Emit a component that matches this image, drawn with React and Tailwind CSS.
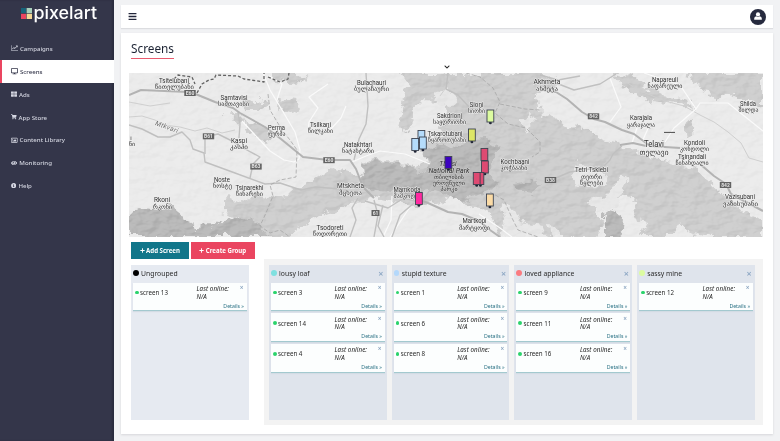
import React from "react";
import {
  FaDesktop, FaThLarge, FaShoppingCart, FaRegImage, FaEye,
  FaInfoCircle, FaBars, FaPlus, FaChevronDown,
} from "react-icons/fa";

function LineChartIcon({ className }) {
  return (
    <svg viewBox="0 0 14 12" className={className} fill="none" stroke="currentColor">
      <path d="M0.6 0.5V11.2H14" strokeWidth="1.2" />
      <path d="M2.6 8.4L5.6 5L7.8 7L12 2.4" strokeWidth="1.9" />
      <path d="M9.4 1.2H13.2V5Z" fill="currentColor" stroke="none" />
    </svg>
  );
}

const NAV = [
  { label: "Campaigns", icon: LineChartIcon, size: "h-[6px] w-[7px]" },
  { label: "Screens", icon: FaDesktop, active: true, size: "h-[6.5px] w-[7px]" },
  { label: "Ads", icon: FaThLarge, size: "size-[6px]" },
  { label: "App Store", icon: FaShoppingCart, size: "size-[5.6px]" },
  { label: "Content Library", icon: FaRegImage, size: "h-[6.5px] w-[6.6px]" },
  { label: "Monitoring", icon: FaEye, size: "h-[6px] w-[6.3px]" },
  { label: "Help", icon: FaInfoCircle, size: "size-[5.4px]" },
];

const GROUPS = [
  { name: "lousy loaf", color: "#7fe0e0", screens: ["screen 3", "screen 14", "screen 4"] },
  { name: "stupid texture", color: "#b4d8fb", screens: ["screen 1", "screen 6", "screen 8"] },
  { name: "loved appliance", color: "#fb7b80", screens: ["screen 9", "screen 11", "screen 16"] },
  { name: "sassy mine", color: "#dcfba0", screens: ["screen 12"] },
];

/* [text, centre x, baseline y, width] */
const PLACES = [
  ["Tsitelubani", 174, 83, 30], ["წითელუბანი", 174.5, 89, 39],
  ["Samtavisi", 234, 100, 27], ["სამთავისი", 233.5, 106, 31],
  ["Perma", 276.5, 130, 17], ["ფერმა", 276.5, 136, 18],
  ["Kaspi", 239, 143, 16], ["კასპი", 239, 149, 18],
  ["Tsilkani", 320.5, 127, 21], ["წილკანი", 320.5, 133, 25],
  ["Noste", 222, 182, 16], ["ნოსტე", 222.5, 188, 19],
  ["Tsinarekhi", 249.5, 190, 28], ["წინარეხი", 249.5, 196, 27],
  ["Rkoni", 162, 202, 16], ["რკონი", 162.5, 209, 19],
  ["Tsodoreti", 330, 230, 27], ["წოდორეთი", 330, 236, 34],
  ["Bulachauri", 371.5, 85, 29], ["ბულაჩაური", 371.5, 91, 35],
  ["Natakhtari", 358, 147, 28], ["ნატახტარი", 358, 153, 32],
  ["Mtskheta", 350.5, 188, 27], ["მცხეთა", 350.5, 195, 23],
  ["Mamkoda", 407, 192, 27], ["მამკოდა", 406, 198, 25],
  ["Sakdrioni", 449.5, 117.5, 25], ["საყდრიონი", 449.5, 124, 33],
  ["Sioni", 476.5, 107, 14], ["სიონი", 476.5, 113, 17],
  ["Tskarotubani", 445, 135.5, 35], ["წყაროთუბანი", 447, 142, 38],
  ["Kochbaani", 515, 163.5, 29], ["კოჭბაანი", 514, 170, 27],
  ["Martkopi", 474.5, 223, 24], ["მარტყოფი", 474.5, 230, 31],
  ["Akhmeta", 547, 84, 27], ["ახმეტა", 547, 91, 22],
  ["Napareuli", 665, 81.5, 26], ["ნაფარეული", 665, 88, 35],
  ["Shilda", 748, 105.5, 16], ["შილდა", 748.5, 111.5, 20],
  ["Karajala", 641, 120, 22], ["ყარაჯალა", 641, 126.5, 28],
  ["Kondoli", 694.5, 145, 21], ["კონდოლი", 694.5, 151, 29],
  ["Tsinandali", 692, 159, 28], ["წინანდალი", 692, 165, 33],
  ["Tetri Tsklebi", 591.5, 172, 33], ["თეთრი", 591.5, 178.5, 21], ["წყლები", 591.5, 185, 23],
  ["Vazisubani", 740, 199, 30], ["ვაზისუბანი", 740.5, 205.5, 35],
];

const SHIELDS = [
  ["E60", 190, 93], ["E60", 329, 160.2], ["B61", 208.5, 136.3], ["B63", 256, 166.6],
  ["61", 375.5, 213], ["842", 593.5, 116.3], ["842", 725.5, 185], ["B38", 550.5, 180],
];

const PINS = [
  [487, 110, "#dcfba0"], [468.5, 129, "#dde666"], [418, 130.5, "#b5dcfb"],
  [411.8, 138.5, "#b5dcfb"], [419.5, 137, "#b5dcfb"], [445, 156.5, "#3d03c0"],
  [481, 148.5, "#de4a72"], [481.5, 161, "#de4a72"], [477, 172.5, "#de4a72"],
  [473.3, 172.5, "#de4a72"], [415.5, 192.5, "#ff2aa0"], [486.5, 194, "#fbdba6"],
];

const HIGHLAND = [
  "M222 200L228 196L241 202L262 195L285 198L292 190L310 182L330 168L348 172L362 178L374 190L366 202L350 203L338 210L322 213L305 224L285 237H266L254 222L240 217L222 212Z",
  "M240 101L258 100L271 104L262 110L246 110Z M278 99L294 101L300 110L290 113L277 108Z M226 112L236 112L245 121L236 124Z M243 121L262 127L272 136L268 143L250 134Z M273 73H301L306 79L290 85L275 79Z",
  "M400 73H544L560 84L538 97L540 116L552 111L560 122L570 127L590 130L601 139L616 143L624 147L635 149L646 158L662 159L676 162L684 168L697 170L708 180L720 191L733 200L742 212L763 219V237H715L700 232L690 236L682 222L672 237H640L646 222L632 218L636 200L618 195L630 178L622 174L608 197L590 200L596 213L604 223L596 237H500L492 214L484 208L466 204L452 196L440 202L422 206L390 202L370 198L362 180L361 164L375 160L408 163L420 168L432 156L420 150L430 140L446 136L438 126L444 112L440 102L422 101L410 112L414 122L404 134L399 119L406 103L400 91L408 84Z",
  "M612 73L634 78L648 88L662 95L690 101L694 110L678 104L650 101L636 95L622 87Z M686 73H763V109L748 99L735 99L725 91L716 101L705 88L694 84Z M684 126L694 118L691 133L686 138Z",
];
const FOREST = [
  "M361 166L375 162L390 164L408 164L424 174L442 165L440 178L428 189L412 194L380 192L363 187Z",
  "M424 150L440 145L458 146L472 140L488 139L500 147L494 160L489 172L499 186L478 195L462 202L444 194L430 192L423 176L430 162Z",
  "M129 215L140 207L156 210L167 206L176 214L196 228L214 226L225 218L245 217L258 222L268 237H129Z",
  "M604 216L614 209L625 217L624 230L616 237H604Z",
  "M515 184L534 180L542 184L532 193L517 190Z",
];
const CLEARINGS = [
  "M433 98L446 88L456 98L450 108L438 106Z M518 120L530 112L536 121L527 132Z M576 160L586 165L607 175L603 184L578 186L574 176Z M500 208L510 204L520 221L543 224L548 237H504Z M550 225L556 226L560 237H552Z M590 200L606 196L616 187L622 174L630 178L620 195L616 207L606 212L596 210Z",
];

const ROADS = [
  "M129 95L141 90L188 92L198 95L215 102L233 108L240 113L265 127L281 139L303 157L328 160L350 160L356 169L363 187L374 198",
  "M538 89L556 92L567 99L582 112L594 119L605 122L622 130L634 134L650 146L680 148",
  "M620 145L633 143L646 146M700 164L714 176L726 184L731 194L748 203L763 211",
  "M414 198L428 203L448 212L462 214L479 221L490 230L500 237",
];
const MINOR = [
  "M129 125L142 129L158 137L170 137L182 132L190 140L193 149L204 153L205 162L235 173L265 184L280 183L301 190L315 187L341 189",
  "M205 154L205 137L218 134L230 140L245 149L260 157L253 164L250 178",
  "M238 112L240 124L239 138M366 73L368 106L366 124L359 139L354 160",
  "M556 83L574 90L600 84L616 74M540 75L558 80L580 76M551 180L570 172L603 167L610 160L613 154L622 146",
  "M358 198L352 208L356 220L350 237M365 201L388 208L404 198L425 204M374 200L378 215L374 237M383 205L378 226L384 237",
  "M448 73L446 89L458 95L470 108M422 201L433 186L462 180M392 237L400 215L414 203",
];
const TRACKS = [
  "M263 73L270 90L282 110L295 132L300 150L299 159L294 162L284 160L270 151L242 121",
  "M269 76L282 84L277 100M308 133L309 122L318 108L309 97L328 84M346 106L341 118L330 130M352 162L366 156L380 151L405 154L430 164",
  "M610 78L621 107L610 122M644 73L680 85L696 109L674 128L665 142M696 109L700 103L728 103L738 111L763 131M637 128L632 143M650 124L642 142",
  "M479 214L500 228L512 237M392 196L391 220L383 237M410 207L390 237",
];
const BORDERS = [
  "M268 94L270 110L282 130L290 140L297 150L296 177L280 180L270 185L273 196L266 213L260 226L270 233L280 230L290 237",
  "M466 73L480 77L493 88L500 102L495 113L508 124L526 128L540 142L540 152L532 157M490 192L504 200L512 218L518 230L538 237M500 104L525 109L540 110",
];

function MapView() {
  return (
    <svg viewBox="129 73 634 164" className="block h-[164px] w-[634px]" fontFamily='Roboto, "DejaVu Sans", sans-serif'>
      <defs>
        <filter id="rough" x="0" y="0" width="100%" height="100%">
          <feTurbulence type="fractalNoise" baseFrequency="0.1" numOctaves="4" seed="3" result="n" />
          <feDisplacementMap in="SourceGraphic" in2="n" scale="13" xChannelSelector="R" yChannelSelector="G" />
        </filter>
        <filter id="relief" x="0" y="0" width="100%" height="100%" colorInterpolationFilters="sRGB">
          <feTurbulence type="fractalNoise" baseFrequency="0.07 0.11" numOctaves="3" seed="8" result="n" />
          <feDiffuseLighting in="n" surfaceScale="7" diffuseConstant="0.72" lightingColor="#ffffff" result="lit">
            <feDistantLight azimuth="225" elevation="50" />
          </feDiffuseLighting>
          <feComposite in="lit" in2="SourceGraphic" operator="in" />
        </filter>
      </defs>
      <rect x="129" y="73" width="634" height="164" fill="#ebebeb" />
      <g filter="url(#rough)">
        {HIGHLAND.map((d) => <path key={d} d={d} fill="#cecece" />)}
        {FOREST.map((d) => <path key={d} d={d} fill="#b9b9b9" />)}
        {CLEARINGS.map((d) => <path key={d} d={d} fill="#e7e7e7" />)}
      </g>
      <rect x="129" y="73" width="634" height="164" filter="url(#relief)" className="opacity-25 mix-blend-soft-light" />
      <g fill="none" strokeLinejoin="round">
        <path d="M129 117L142 116L155 120L164 125L180 127L195 131L207 128L222 133L235 130M620 78L638 90L665 101L684 106L700 115L714 122L728 132L741 143L749 158L763 162M444 73L450 82L440 96M129 102L150 106L170 103" stroke="#cfcfcf" strokeWidth="1" />
        {TRACKS.map((d) => <path key={d} d={d} stroke="#fafafa" strokeWidth="1.2" />)}
        {MINOR.map((d) => <path key={d} d={d} stroke="#c0c0c0" strokeWidth="1.4" />)}
        {ROADS.map((d) => <path key={d} d={d} stroke="#b3b3b3" strokeWidth="2" />)}
        {BORDERS.map((d) => <path key={d} d={d} stroke="#a6a6a6" strokeWidth="0.8" strokeDasharray="4 2" />)}
        <path d="M174 79L178 75L192 77L195 84M197 93L202 84L209 80L214 79L216 75L238 76L244 79L264 82L264 73M268 77L280 82L288 79L289 73" stroke="#626262" strokeWidth="1.3" strokeDasharray="3 2" />
        <path d="M664 132.4H675" stroke="#4a4a4a" strokeWidth="1" />
      </g>
      <g textAnchor="middle" fill="#2e2e2e" stroke="#f0f0f0" strokeWidth="1" strokeLinejoin="round" paintOrder="stroke">
        {PLACES.map(([t, x, y, w]) => (
          <text key={t} x={x} y={y} fontSize={t.charCodeAt(0) > 255 ? 6.5 : 7} textLength={w} lengthAdjust="spacingAndGlyphs">{t}</text>
        ))}
        <text x="654" y="147" fontSize="8.4" textLength="20" lengthAdjust="spacingAndGlyphs">Telavi</text>
        <text x="654" y="155" fontSize="7.6" textLength="29" lengthAdjust="spacingAndGlyphs">თელავი</text>
        <text x="131" y="140" fontSize="6">i</text>
        <text x="132" y="146" fontSize="6">ნი</text>
        <g strokeWidth="0.8" stroke="#d0d0d0">
          <text x="448" y="165.5" fontSize="6.8" fontStyle="italic">Tbilisi</text>
          <text x="449" y="172.5" fontSize="6.8" fontStyle="italic" textLength="41" lengthAdjust="spacingAndGlyphs">National Park</text>
          <text x="449" y="179" fontSize="6" textLength="30" lengthAdjust="spacingAndGlyphs">თბილისის</text>
          <text x="449" y="185" fontSize="6" textLength="32" lengthAdjust="spacingAndGlyphs">ეროვნული</text>
          <text x="449" y="191" fontSize="6" textLength="17" lengthAdjust="spacingAndGlyphs">პარკი</text>
        </g>
        <text fontSize="6.8" fill="#707070" fontStyle="italic" transform="translate(166 129) rotate(20)" textLength="24">Mtkvari</text>
      </g>
      {SHIELDS.map(([t, x, y]) => (
        <g key={`${x}-${y}`}>
          <rect x={x - (t.length > 2 ? 5.7 : 4)} y={y - 3} width={t.length > 2 ? 11.4 : 8} height="6" fill="#626262" />
          <text x={x} y={y + 1.8} fontSize="5" fontWeight="700" textAnchor="middle" fill="#e4e4e4">{t}</text>
        </g>
      ))}
      {PINS.map(([x, y, c]) => (
        <g key={`${x}-${y}`}>
          <circle cx={x + 3.4} cy={y + 12.9} r="1.4" fill="#1f2435" />
          <rect x={x} y={y} width="6.8" height="12" fill={c} stroke="#3d4350" strokeWidth="0.9" />
        </g>
      ))}
    </svg>
  );
}

function ScreenCard({ name }) {
  return (
    <div className="flex h-[28.7px] border-b border-[#a3c9cf] bg-[#fcfefe] shadow-[0_1px_1px_#d3dce4]">
      <div className="flex w-[63.5px] items-center gap-[1.5px] pb-[8px] pl-[2px] text-[6.2px] text-[#2a2a2a]">
        <span className="size-[3.6px] rounded-full bg-[#2bd36c]" />
        <span className="whitespace-nowrap">{name}</span>
      </div>
      <div className="flex flex-1 flex-col pt-[2.3px]">
        <div className="flex justify-between pr-[3px]">
          <div className="text-[6.2px] leading-[7.7px] tracking-[0.1px] text-[#222] italic">
            <div className="whitespace-nowrap">Last online:</div>
            <div>N/A</div>
          </div>
          <span className="text-[6.5px] leading-[6px] font-semibold text-[#8ba5c0]">×</span>
        </div>
        <div className="mt-[1.3px] pr-[2.5px] text-right text-[5.2px] leading-[8px] text-[#2b7285]">Details »</div>
      </div>
    </div>
  );
}

function Column({ name, color, screens, closable, tone }) {
  return (
    <section className={`flex h-[155px] w-[117.5px] shrink-0 flex-col px-[2px] ${tone}`}>
      <header className="flex h-[17.7px] items-center">
        <span className="mb-[2px] size-[5.6px] rounded-full" style={{ backgroundColor: color }} />
        <h2 className="ml-[2.5px] flex-1 text-[6.8px] whitespace-nowrap text-[#2a2a2a]">{name}</h2>
        {closable && <span className="mr-[1px] text-[9px] leading-none font-semibold text-[#8fa9c5]">×</span>}
      </header>
      <div className="flex flex-col gap-[2px]">
        {screens.map((s) => <ScreenCard key={s} name={s} />)}
      </div>
    </section>
  );
}

function Sidebar() {
  return (
    <aside className="flex w-[114px] shrink-0 flex-col bg-[#34364a] shadow-[inset_-2px_0_2px_#2a2c3e]">
      <div className="flex h-[37px] pl-[20px]">
        <svg viewBox="0 0 84 30" className="h-[30px] w-[84px]">
          <rect x="1" y="8" width="5" height="5.2" fill="#17647a" />
          <rect x="6.6" y="8" width="5.4" height="5.2" fill="#a9d0bc" />
          <rect x="1" y="13.8" width="5" height="5.2" fill="#ea4560" />
          <rect x="6.6" y="13.8" width="5.4" height="5.2" fill="#f6d895" />
          <text x="13.5" y="18.6" fontFamily="Inter, sans-serif" fontWeight="500" fontSize="16.8" textLength="63.5" lengthAdjust="spacingAndGlyphs" fill="#fff">pixelart</text>
        </svg>
      </div>
      <nav className="flex flex-col">
        {NAV.map(({ label, icon: Icon, active, size }) => (
          <a
            key={label}
            className={`flex h-[22.9px] items-center gap-[2px] text-[6.1px] font-medium ${
              active ? "border-l-2 border-[#ea4560] bg-white pl-[9px] text-[#34364a]" : "pl-[11px] text-[#d5d7e2]"
            }`}
          >
            <Icon className={size} />
            <span>{label}</span>
          </a>
        ))}
      </nav>
    </aside>
  );
}

export default function App() {
  return (
    <div className='flex h-[441px] w-[780px] overflow-hidden bg-[#f1f2f4] font-["Noto_Sans","Open_Sans",sans-serif]'>
      <Sidebar />
      <main className="flex flex-col gap-[5px] pt-[5px] pl-[7px]">
        <div className="flex h-[23px] w-[652px] items-center justify-between bg-white pr-[7px] pl-[7px] shadow-[0_1px_1px_#dcdde0]">
          <FaBars className="size-[9px] text-[#22263a]" />
          <svg viewBox="0 0 16 16" className="size-[16px]">
            <circle cx="8" cy="8" r="8" fill="#262a3e" />
            <circle cx="8" cy="5.4" r="2.1" fill="#fff" />
            <path d="M4.2 10.8V9.4Q4.2 7.5 6.3 7.3Q8 8.6 9.7 7.3Q11.8 7.5 11.8 9.4V10.8Z" fill="#fff" />
          </svg>
        </div>
        <div className="flex h-[401px] w-[652px] flex-col bg-white pl-[8px] shadow-[0_1px_2px_#d6d7da]">
          <div className="flex h-[26px] pt-[6px] pl-[2px]">
            <h1 className="h-[20px] border-b border-[#ea5a6e] text-[11.8px] leading-[19px] text-[#1c2333]">Screens</h1>
          </div>
          <div className="flex h-[14px] w-[636px] items-center justify-center pt-[2px]">
            <FaChevronDown className="size-[6px] text-[#222]" />
          </div>
          <MapView />
          <div className="mt-[5px] ml-[2px] flex gap-[2.5px] text-[6.1px] font-bold text-white">
            <button className="flex h-[17px] w-[57.5px] items-center justify-center gap-[1.5px] bg-[#11768a]">
              <FaPlus className="size-[5px]" />Add Screen
            </button>
            <button className="flex h-[17px] w-[63.5px] items-center justify-center gap-[1.5px] bg-[#ea4560]">
              <FaPlus className="size-[5px]" />Create Group
            </button>
          </div>
          <div className="ml-[2px] flex">
            <div className="pt-[6px]">
              <Column name="Ungrouped" color="#000000" screens={["screen 13"]} tone="bg-[#e6eaf1]" />
            </div>
            <div className="ml-[15.5px] flex h-[166px] w-[499px] gap-[5.2px] bg-[#f3f3f3] pt-[6px] pl-[5px]">
              {GROUPS.map((g) => <Column key={g.name} {...g} closable tone="bg-[#dfe4ec]" />)}
            </div>
          </div>
        </div>
      </main>
    </div>
  );
}
